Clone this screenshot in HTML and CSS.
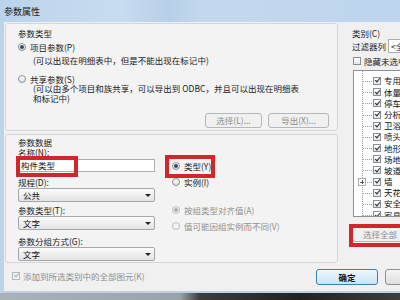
FILE: index.html
```html
<!DOCTYPE html>
<html>
<head>
<meta charset="utf-8">
<link rel="stylesheet" href="styles.css">
</head>
<body>
<div class="win">
  <div class="title"><span class="title-text">参数属性</span></div>
  <div class="client">
    <div class="main">
      <div class="leftcol">
        <div class="group g1">
          <div class="cap">参数类型</div>
          <div class="radio-row r1"><span class="radio on"></span><span>项目参数(P)</span></div>
          <div class="desc d1">(可以出现在明细表中，但是不能出现在标记中)</div>
          <div class="radio-row r2"><span class="radio"></span><span>共享参数(S)</span></div>
          <div class="desc d2">(可以由多个项目和族共享，可以导出到 ODBC，并且可以出现在明细表<br>和标记中)</div>
          <div class="btn-row">
            <span class="btn dis b-sel">选择(L)...</span>
            <span class="btn dis b-exp">导出(X)...</span>
          </div>
        </div>
        <div class="group g2">
          <div class="cap cap2">参数数据</div>
          <div class="data-row">
            <div class="data-left">
              <div class="lbl">名称(N):</div>
              <div class="input">构件类型<span class="mark m1"></span></div>
              <div class="lbl l-disc">规程(D):</div>
              <div class="select">公共<span class="arrow"></span></div>
              <div class="lbl l-type">参数类型(T):</div>
              <div class="select">文字<span class="arrow"></span></div>
              <div class="lbl l-group">参数分组方式(G):</div>
              <div class="select">文字<span class="arrow"></span></div>
            </div>
            <div class="data-right">
              <div class="radio-row rt"><span class="radio on"></span><span>类型(Y)</span><span class="mark m2"></span></div>
              <div class="radio-row ri"><span class="radio"></span><span>实例(I)</span></div>
              <div class="radio-row ra dis-text"><span class="radio on dis"></span><span>按组类型对齐值(A)</span></div>
              <div class="radio-row rv dis-text"><span class="radio dis"></span><span>值可能因组实例而不同(V)</span></div>
            </div>
          </div>
        </div>
      </div>
      <div class="rightcol">
        <div class="cap rc-cap">类别(C)</div>
        <div class="filter-row"><span>过滤器列</span><span class="combo">&lt;全部显示&gt;</span></div>
        <div class="hide-row"><span class="cbox"></span><span>隐藏未选中类别(U)</span></div>
        <div class="listbox">
          <div class="tree-line"></div>
          <div class="tree-row"><span class="cbox on"></span><span>专用设备</span></div>
          <div class="tree-row"><span class="cbox on"></span><span>体量</span></div>
          <div class="tree-row"><span class="cbox on"></span><span>停车场</span></div>
          <div class="tree-row"><span class="cbox on"></span><span>分析模型</span></div>
          <div class="tree-row"><span class="cbox on"></span><span>卫浴装置</span></div>
          <div class="tree-row"><span class="cbox on"></span><span>喷头</span></div>
          <div class="tree-row"><span class="cbox on"></span><span>地形</span></div>
          <div class="tree-row"><span class="cbox on"></span><span>场地</span></div>
          <div class="tree-row"><span class="cbox on"></span><span>坡道</span></div>
          <div class="tree-row"><span class="expander"></span><span class="cbox on"></span><span>墙</span></div>
          <div class="tree-row"><span class="cbox on"></span><span>天花板</span></div>
          <div class="tree-row"><span class="cbox on"></span><span>安全设备</span></div>
          <div class="tree-row"><span class="cbox on"></span><span>家具</span></div>
        </div>
        <div class="btn dis b-all">选择全部<span class="mark m3"></span></div>
      </div>
    </div>
    <div class="bottom">
      <span class="cbox on dis"></span><span class="dis-text add-text">添加到所选类别中的全部图元(K)</span>
      <span class="btn ok">确定</span>
      <span class="btn cancel">取消</span>
    </div>
  </div>
</div>
<div class="taskbar"></div>
</body>
</html>
```

FILE: styles.css
```css
body {
  margin: 0;
  width: 400px;
  height: 300px;
  overflow: hidden;
  background: #2a2a2a;
  font-family: "Noto Sans CJK SC", "DejaVu Sans", sans-serif;
  font-size: 8.5px;
  color: #222;
}

.win {
  width: 470px;
  height: 293px;
  display: flex;
  flex-direction: column;
  background: #f0f0f0;
}

.title {
  height: 22px;
  line-height: 23px;
  padding-left: 4px;
  font-size: 9px;
  color: #1a1a1a;
  background: linear-gradient(to right, #bad3ec 0, #c8dcf0 120px, #b7cfe8 170px, #c2d8ee 200px, #bcd4ed 100%);
}

.client {
  flex: 1;
  display: flex;
  flex-direction: column;
  border-left: 4px solid #bcd3ea;
  border-bottom: 2px solid #bdd0e4;
}

.main {
  height: 241px;
  display: flex;
}

.leftcol {
  margin-left: 1px;
  width: 333px;
  display: flex;
  flex-direction: column;
}

.group {
  box-sizing: border-box;
  border: 1px solid #d3d6d9;
  border-radius: 3px;
  padding: 0 8px 0 12px;
  background: #f3f3f3;
}

.g1 {
  margin-top: 1px;
  height: 108px;
}

.g2 {
  margin-top: 3px;
  height: 129px;
}

.cap, .lbl {
  height: 10px;
  line-height: 10px;
  white-space: nowrap;
}

.g1 .cap { margin-top: 4px; }
.cap2 { margin-top: 2px; }

.radio-row {
  position: relative;
  height: 10px;
  line-height: 10px;
  display: flex;
  align-items: center;
  gap: 4px;
  white-space: nowrap;
}

.r1 { margin-top: 4px; }
.r2 { margin-top: 9px; }

.radio {
  box-sizing: border-box;
  width: 8px;
  height: 8px;
  border-radius: 50%;
  border: 1px solid #8b8f94;
  background: linear-gradient(#ffffff, #dcdfe2);
  display: flex;
  align-items: center;
  justify-content: center;
  flex: none;
}

.radio.on::after {
  content: "";
  width: 4px;
  height: 4px;
  border-radius: 50%;
  background: #2f4f72;
}

.radio.dis {
  border-color: #b9bcbf;
  background: #f4f4f4;
}

.radio.on.dis::after {
  background: #a9adb1;
}

.desc {
  margin-left: 15px;
  white-space: nowrap;
}

.d1 {
  margin-top: 3px;
  height: 10px;
  line-height: 10px;
}

.d2 {
  height: 19px;
  line-height: 9.5px;
}

.btn-row {
  margin-top: 10px;
  display: flex;
  justify-content: flex-end;
  gap: 6px;
}

.btn {
  position: relative;
  box-sizing: border-box;
  height: 15px;
  line-height: 13px;
  border: 1px solid #8e9296;
  border-radius: 3px;
  background: linear-gradient(#f5f5f5, #dedede);
  text-align: center;
  white-space: nowrap;
}

.btn.dis {
  color: #8d8d8d;
  border-color: #b3b7ba;
  background: #f0f0f0;
}

.b-sel { width: 57px; }
.b-exp { width: 61px; }

.data-row {
  display: flex;
}

.data-left {
  width: 137px;
  display: flex;
  flex-direction: column;
}

.input {
  position: relative;
  box-sizing: border-box;
  margin-top: 2px;
  height: 13px;
  line-height: 11px;
  padding-left: 2px;
  border: 1px solid #abadb3;
  background: #fff;
  color: #111;
}

.l-disc { margin-top: 5px; }
.l-type { margin-top: 3px; }
.l-group { margin-top: 6px; }

.select {
  position: relative;
  box-sizing: border-box;
  margin-top: 1px;
  height: 14px;
  line-height: 12px;
  padding-left: 4px;
  border: 1px solid #a3a6aa;
  border-radius: 2px;
  background: linear-gradient(#fbfbfb, #e3e3e3);
  color: #111;
}

.arrow {
  position: absolute;
  right: 3px;
  top: 5px;
  width: 0;
  height: 0;
  border-top: 3px solid #222;
  border-left: 3px solid transparent;
  border-right: 3px solid transparent;
}

.data-right {
  margin-left: 17px;
  display: flex;
  flex-direction: column;
}

.rt { margin-top: 14px; }
.ri { margin-top: 6px; }
.ra { margin-top: 18px; }
.rv { margin-top: 6px; }

.dis-text { color: #8f8f8f; }

.mark {
  position: absolute;
  box-sizing: border-box;
  border: 4px solid #d3262b;
  pointer-events: none;
}

.m1 { left: -3px; top: -4px; width: 62px; height: 21px; }
.m2 { left: -7px; top: -6px; width: 50px; height: 23px; }
.m3 { left: -4px; top: -4px; width: 80px; height: 23px; }

.rightcol {
  margin-left: 14px;
  width: 110px;
  display: flex;
  flex-direction: column;
}

.rc-cap { margin-top: 6px; }

.filter-row {
  margin-top: 1px;
  height: 14px;
  display: flex;
  align-items: center;
  white-space: nowrap;
}

.combo {
  box-sizing: border-box;
  margin-left: 2px;
  height: 14px;
  line-height: 12px;
  padding-left: 2px;
  width: 80px;
  border: 1px solid #abadb3;
  background: #fff;
}

.hide-row {
  margin-top: 3px;
  height: 10px;
  display: flex;
  align-items: center;
  gap: 3px;
  padding-left: 1px;
  white-space: nowrap;
}

.cbox {
  position: relative;
  box-sizing: border-box;
  width: 8px;
  height: 8px;
  border: 1px solid #8b8f94;
  background: linear-gradient(#ffffff, #e2e4e6);
  flex: none;
}

.cbox.on::after {
  content: "";
  position: absolute;
  left: 1.5px;
  top: -0.5px;
  width: 2px;
  height: 4px;
  border-right: 1.5px solid #1c2a3a;
  border-bottom: 1.5px solid #1c2a3a;
  transform: rotate(40deg);
}

.cbox.dis {
  border-color: #b5b8bb;
  background: #f3f3f3;
}

.cbox.dis::after {
  border-color: #a9adb0;
}

.listbox {
  position: relative;
  box-sizing: border-box;
  margin-top: 4px;
  margin-left: 1px;
  height: 147px;
  padding-top: 4.4px;
  border: 1px solid #8d9197;
  background: #fff;
  overflow: hidden;
}

.tree-line {
  position: absolute;
  left: 8px;
  top: 0;
  bottom: 0;
  border-left: 1px dotted #a0a0a0;
}

.tree-row {
  position: relative;
  height: 11.2px;
  line-height: 11.2px;
  display: flex;
  align-items: center;
  gap: 3px;
  padding-left: 19px;
  white-space: nowrap;
  color: #111;
}

.tree-row::before {
  content: "";
  position: absolute;
  left: 9px;
  top: 5.6px;
  width: 9px;
  border-top: 1px dotted #a0a0a0;
}

.expander {
  position: absolute;
  left: 4px;
  top: 2px;
  box-sizing: border-box;
  width: 8px;
  height: 8px;
  border: 1px solid #a8acb0;
  background: #fff;
  z-index: 1;
}

.expander::before {
  content: "";
  position: absolute;
  left: 1px;
  top: 2.5px;
  width: 4px;
  border-top: 1px solid #555;
}

.expander::after {
  content: "";
  position: absolute;
  left: 2.5px;
  top: 1px;
  height: 4px;
  border-left: 1px solid #555;
}

.b-all {
  margin-top: 10px;
  width: 70px;
  padding-left: 10px;
  text-align: left;
}

.bottom {
  height: 28px;
  display: flex;
  align-items: center;
  padding-left: 8px;
  white-space: nowrap;
}

.add-text {
  margin-left: 3px;
  margin-top: -3px;
}

.bottom .cbox { margin-top: -3px; }

.ok {
  margin-left: auto;
  width: 62px;
  height: 16px;
  line-height: 14px;
  border-color: #3c7fb1;
  background: linear-gradient(#eef7fd, #c9e4f6);
  color: #111;
  font-weight: bold;
}

.cancel {
  margin-left: 7px;
  margin-right: 23px;
  width: 62px;
  height: 16px;
  line-height: 14px;
}

.taskbar {
  height: 7px;
  background: linear-gradient(to right, #a9b2ba 0, #9aa3ab 180px, #3a3c3e 200px, #222 300px, #3d3d3d 400px);
}
```
